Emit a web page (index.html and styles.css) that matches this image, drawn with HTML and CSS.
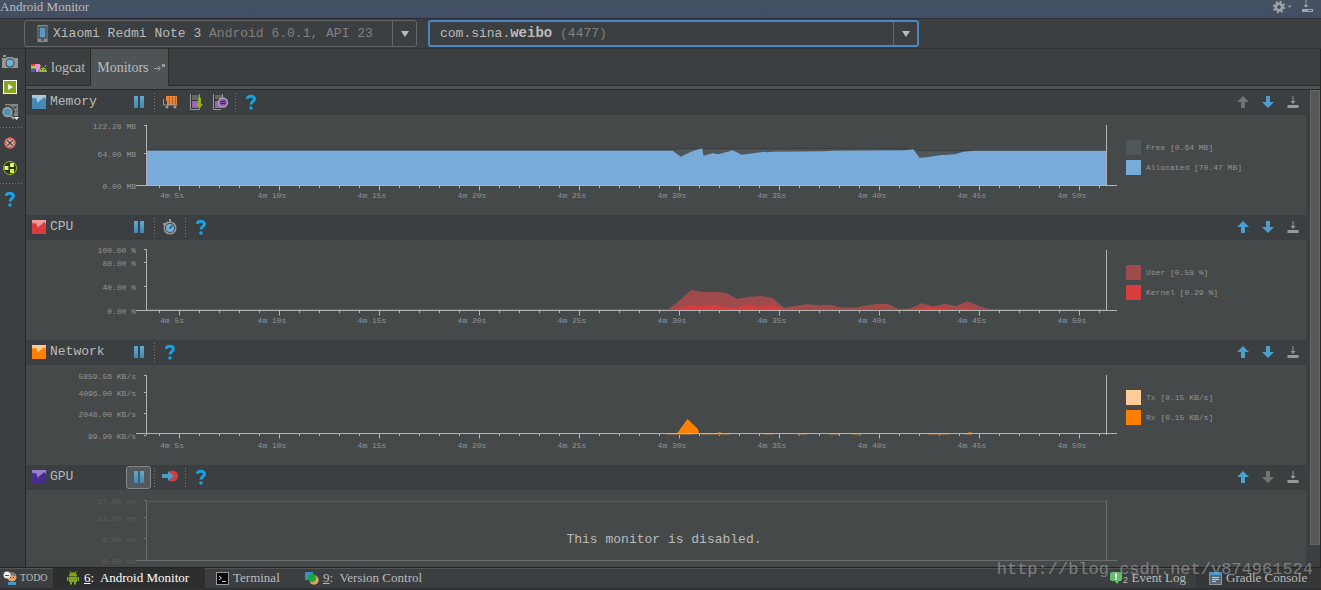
FILE: index.html
```html
<!DOCTYPE html>
<html lang="en">
<head>
<meta charset="utf-8">
<title>Android Monitor</title>
<link rel="stylesheet" href="styles.css">
</head>
<body>
<svg width="0" height="0" class="defs" aria-hidden="true">
  <defs>
    <linearGradient id="blue" x1="0" y1="0" x2="0" y2="1"><stop offset="0" stop-color="#62a9d2"/><stop offset="1" stop-color="#3f8bb8"/></linearGradient>
    <symbol id="pause" viewBox="0 0 16 16"><path fill="url(#blue)" d="M3 2h4v12H3zM9 2h4v12H9z"/></symbol>
    <symbol id="wave" viewBox="0 0 14 14"><path fill="currentColor" d="M0 4L1 2 2 4 3 3 4 3 6 8 8 5 9 5 11 3 12 2 14 4V14H0z"/></symbol>
    <symbol id="help" viewBox="0 0 16 16"><path fill="none" stroke="#13a3e6" stroke-width="3" d="M4.300 4.800C4.500 1.500 11.600 1.400 11.500 5C11.400 7.300 8 7.500 8 10.600"/><circle cx="8" cy="14" r="1.800" fill="#13a3e6"/></symbol>
    <symbol id="up" viewBox="0 0 16 16"><path fill="currentColor" d="M8 2l6 6h-4v6H6V8H2z"/></symbol>
    <symbol id="down" viewBox="0 0 16 16"><path fill="currentColor" d="M8 14l6-6h-4V2H6v6H2z"/></symbol>
    <symbol id="dock" viewBox="0 0 16 16"><path fill="#999" d="M7.500 2h1v5h2L8 10 5.500 7h2zM2.500 11h11v3h-11z"/></symbol>
    <symbol id="timer" viewBox="0 0 16 16"><path fill="none" stroke="#969696" stroke-width="2" d="M8 0v3M1 5h3l2-2"/><circle cx="8" cy="9" r="5.800" fill="#40484c" stroke="#969696" stroke-width="1.500"/><circle cx="8" cy="9" r="4" fill="#6fb2e0"/><path stroke="#2a4860" stroke-width="1.500" d="M7.500 9.500l3-3"/></symbol>
  </defs>
</svg>

<header class="titlebar">
  <h1>Android Monitor</h1>
  <button aria-label="Settings"><svg width="20" height="14" viewBox="0 0 20 14"><circle cx="7" cy="7" r="3.200" fill="none" stroke="#a2a5a8" stroke-width="2.600"/><circle cx="7" cy="7" r="5.200" fill="none" stroke="#a2a5a8" stroke-width="2" stroke-dasharray="2 2.080"/><path fill="#888c92" d="M15 5.500h5L17.500 8z"/></svg></button>
  <button aria-label="Hide"><svg width="12" height="14" viewBox="0 0 12 14"><path fill="#a2a5a8" d="M3.500 0h1v5h2L4 7.500 1.500 5h2zM0 9h11v3H0z"/><path fill="#49556b" d="M6 10h4v1H6z"/></svg></button>
</header>

<div class="toolbar">
  <div class="combo device">
    <svg width="11" height="17" viewBox="0 0 11 17"><rect x=".5" width="10" height="17" fill="#8b8b8b"/><rect x="2" y="2" width="7" height="11" fill="#559ac4" stroke="#2d3032"/><path fill="#222" d="M4 14.500h3v1H4z"/></svg>
    <span class="value">Xiaomi Redmi Note 3 <span class="dim">Android 6.0.1, API 23</span></span>
    <span class="arrow"></span>
    <select aria-label="Device"><option>Xiaomi Redmi Note 3 Android 6.0.1, API 23</option></select>
  </div>
  <div class="combo process focused">
    <span class="value">com.sina.<b>weibo</b> <span class="dim">(4477)</span></span>
    <span class="arrow"></span>
    <select aria-label="Process"><option>com.sina.weibo (4477)</option></select>
  </div>
</div>

<div class="workspace">
  <nav class="rail" aria-label="Capture tools">
    <button aria-label="Screen capture"><svg width="18" height="16" viewBox="0 0 18 16"><path fill="#969696" d="M2 1h3v2H2zM1 4h4l1-1h6l1 1h4v10H1z"/><circle cx="9" cy="9" r="4.500" fill="#44484a"/><circle cx="9" cy="9" r="3.400" fill="#6db2e0"/></svg></button>
    <button aria-label="Screen record"><svg width="16" height="16" viewBox="0 0 16 16"><rect x="1.500" y="1.500" width="13" height="13" fill="#86a821" stroke="#fff"/><path fill="#fff" d="M6 5l5 3-5 3z"/></svg></button>
    <button aria-label="System information"><svg width="18" height="18" viewBox="0 0 18 18"><path fill="#858585" d="M4 1h13v12H8V8H4z"/><path stroke="#45494b" stroke-width="2" stroke-dasharray="3 1.500" d="M8 4.500h8M11 8.500h5"/><circle cx="6.500" cy="9" r="4.800" fill="#4c90bd" stroke="#3c3f41" stroke-width="4"/><circle cx="6.500" cy="9" r="4.400" fill="#4c90bd" stroke="#a0a0a0" stroke-width="1.600"/><path stroke="#a0a0a0" stroke-width="2" d="M10 13l3 3"/><path fill="#eee" d="M13 14h5l-2.500 3z"/></svg></button>
    <hr>
    <button aria-label="Terminate application"><svg width="14" height="14" viewBox="0 0 14 14"><circle cx="7" cy="7" r="5.800" fill="#d9665b"/><path fill="none" stroke="#eee" stroke-width="3" d="M4 4l6 6M10 4l-6 6"/><path fill="none" stroke="#444" stroke-width="1.600" d="M4 4l6 6M10 4l-6 6"/></svg></button>
    <button aria-label="Layout inspector"><svg width="16" height="16" viewBox="0 0 16 16"><circle cx="8" cy="8" r="6.500" fill="#26380b" stroke="#9cc020"/><path fill="#d5ee4b" d="M2.500 6h4v4h-4zM8 3h4v4H8zM8 9h4v4H8z"/><path fill="#fff9bb" d="M3 6h2v3H3zM9 5h2v2H9z"/></svg></button>
    <hr>
    <button aria-label="Help"><svg width="16" height="16"><use href="#help"/></svg></button>
  </nav>

  <main>
    <div class="tabs" role="tablist">
      <button role="tab" class="tab"><svg width="17" height="10" viewBox="0 0 17 10"><path fill="#e0413c" d="M0 1h4v2H0z"/><path fill="#e8ba32" d="M0 3h4v2H0z"/><path fill="#49a85b" d="M0 5h4v1H0z"/><path fill="#5a57c9" d="M0 6h4v3H0z"/><path fill="#ee8ee0" d="M4 1h5v5L7 9H5V6H4z"/><path fill="#96ba35" d="M8 9c0-6 8-6 8 0z"/><path stroke="#96ba35" d="M9 2l1 2M15 2l-1 2"/><path fill="#333" d="M10 6h1v1h-1zM13 6h1v1h-1z"/></svg>logcat</button>
      <button role="tab" class="tab active" aria-selected="true">Monitors<svg width="12" height="10" viewBox="0 0 12 10"><path fill="none" stroke="#999" d="M0 5.500h6M4 3l2.500 2.500L4 8"/><path fill="#999" d="M8 1h3v3H8z"/></svg></button>
    </div>

    <div class="scroller">
      <div class="monitors">
        <section class="monitor">
          <div class="head">
            <svg class="mark memory-mark" width="14" height="14"><use href="#wave"/></svg>
            <h2>Memory</h2>
            <button aria-label="Pause"><svg width="16" height="16"><use href="#pause"/></svg></button>
            <i class="sep"></i>
            <button aria-label="Initiate GC"><svg width="16" height="16" viewBox="0 0 16 16"><path fill="#e98538" d="M4 2h11v9H5V7H4z"/><path stroke="#a85f2b" d="M7.500 3v7M10.500 3v7M13.500 3v7"/><path fill="none" stroke="#999" d="M1.500 5v6h14"/><circle cx="5" cy="13" r="1.500" fill="#999"/><circle cx="13" cy="13" r="1.500" fill="#999"/></svg></button>
            <button aria-label="Dump Java heap"><svg width="16" height="16" viewBox="0 0 16 16"><path fill="#333" stroke="#999" d="M3.500 0v15.500h9V0"/><path fill="#666" d="M5 1h7v5H5z"/><path fill="#9d62c2" d="M5 7h6v7H5z"/><path fill="#93b027" d="M11 4h3v6h2l-3.500 5L9 10h2z"/></svg></button>
            <button aria-label="Start allocation tracking"><svg width="18" height="16" viewBox="0 0 18 16"><path fill="#333" stroke="#999" d="M10 15.500H2.500V0M11.500 0v4"/><path fill="#666" d="M4 1h7v4H4z"/><path fill="#9d62c2" d="M4 7h6v7H4z"/><circle cx="12" cy="8.500" r="4.500" fill="#8a59ab" stroke="#aaa" stroke-width="1.300"/><path stroke="#2f2a36" d="M9.500 7.500h5M9.500 9.500h5"/></svg></button>
            <i class="sep"></i>
            <button aria-label="Help"><svg width="16" height="16"><use href="#help"/></svg></button>
            <span class="move">
              <button class="off" aria-label="Move up"><svg width="16" height="16"><use href="#up"/></svg></button>
              <button aria-label="Move down"><svg width="16" height="16"><use href="#down"/></svg></button>
              <button aria-label="Minimize"><svg width="16" height="16"><use href="#dock"/></svg></button>
            </span>
          </div>
          <div class="chart">
            <svg class="scale" width="110" height="76"><text x="110" y="14">122.28 MB</text><text x="110" y="42">64.00 MB</text><text x="110" y="74">0.00 MB</text></svg>
            <svg class="plot" viewBox="0 0 981 76" preserveAspectRatio="none">
              <g transform="translate(484 -25) scale(.33333)">
                <path fill="#4f575b" stroke="#373b3c" stroke-width="3" d="M-1422 286V178H160L180 176H800L885 178 900 182H1458V286z"/>
                <path fill="#78aada" d="M-1422 286V182H158L182 200 218 183 247 175 250 197 278 190 295 193 338 181 365 194 400 190 430 185 442 187 455 185 610 184 640 182 855 181 880 178 898 203 920 202 960 196 1005 193 1030 185 1060 182H1458V286z"/>
              </g>
              <path class="axis" d="M8 10.500h2.500V70M8 38.500h2M970.500 10v60M0 70.500h981"/><path class="minor" d="M23 72H964"/><path class="major" d="M43 73H964"/>
            </svg>
            <ul class="legend"><li><i class="free"></i>Free [0.64 MB]</li><li><i class="allocated"></i>Allocated [70.47 MB]</li></ul>
            <div class="times"><span>4m 5s</span><span>4m 10s</span><span>4m 15s</span><span>4m 20s</span><span>4m 25s</span><span>4m 30s</span><span>4m 35s</span><span>4m 40s</span><span>4m 45s</span><span>4m 50s</span></div>
          </div>
        </section>

        <section class="monitor">
          <div class="head">
            <svg class="mark cpu-mark" width="14" height="14"><use href="#wave"/></svg>
            <h2>CPU</h2>
            <button aria-label="Pause"><svg width="16" height="16"><use href="#pause"/></svg></button>
            <i class="sep"></i>
            <button aria-label="Start method tracing"><svg width="16" height="16"><use href="#timer"/></svg></button>
            <i class="sep"></i>
            <button aria-label="Help"><svg width="16" height="16"><use href="#help"/></svg></button>
            <span class="move">
              <button aria-label="Move up"><svg width="16" height="16"><use href="#up"/></svg></button>
              <button aria-label="Move down"><svg width="16" height="16"><use href="#down"/></svg></button>
              <button aria-label="Minimize"><svg width="16" height="16"><use href="#dock"/></svg></button>
            </span>
          </div>
          <div class="chart">
            <svg class="scale" width="110" height="76"><text x="110" y="13">100.00 %</text><text x="110" y="26">80.00 %</text><text x="110" y="50">40.00 %</text><text x="110" y="74">0.00 %</text></svg>
            <svg class="plot" viewBox="0 0 981 76" preserveAspectRatio="none">
              <g transform="translate(504) scale(.33333)">
                <path fill="#9f4b4b" d="M-1480 211V208H85L118 182 153 150 190 156 228 155 260 160 293 177 325 171 360 168 397 173 432 203 500 193 540 196 568 194 600 202 640 203 710 192 743 191 777 208 812 205 845 190 880 199 915 191 948 199 982 184 1020 199 1050 208H1398V211z"/>
                <path fill="#d83c3c" d="M90 211L150 195 190 197 228 194 262 203 295 202 328 193 360 200 397 196 435 209H800L845 204 880 202 950 208 982 204 1025 209V211z"/>
              </g>
              <path class="axis" d="M8 9.500h2.500V70M8 22.500h2M8 46.500h2M970.500 10v60M0 70.500h981"/><path class="minor" d="M23 72H964"/><path class="major" d="M43 73H964"/>
            </svg>
            <ul class="legend"><li><i class="user"></i>User [0.58 %]</li><li><i class="kernel"></i>Kernel [0.29 %]</li></ul>
            <div class="times"><span>4m 5s</span><span>4m 10s</span><span>4m 15s</span><span>4m 20s</span><span>4m 25s</span><span>4m 30s</span><span>4m 35s</span><span>4m 40s</span><span>4m 45s</span><span>4m 50s</span></div>
          </div>
        </section>

        <section class="monitor">
          <div class="head">
            <svg class="mark network-mark" width="14" height="14"><use href="#wave"/></svg>
            <h2>Network</h2>
            <button aria-label="Pause"><svg width="16" height="16"><use href="#pause"/></svg></button>
            <i class="sep"></i>
            <button aria-label="Help"><svg width="16" height="16"><use href="#help"/></svg></button>
            <span class="move">
              <button aria-label="Move up"><svg width="16" height="16"><use href="#up"/></svg></button>
              <button aria-label="Move down"><svg width="16" height="16"><use href="#down"/></svg></button>
              <button aria-label="Minimize"><svg width="16" height="16"><use href="#dock"/></svg></button>
            </span>
          </div>
          <div class="chart">
            <svg class="scale" width="110" height="76"><text x="110" y="14">5859.56 KB/s</text><text x="110" y="31">4096.00 KB/s</text><text x="110" y="52">2048.00 KB/s</text><text x="110" y="74">99.90 KB/s</text></svg>
            <svg class="plot" viewBox="0 0 981 76" preserveAspectRatio="none">
              <path fill="#ff8000" d="M541 68.500L551.500 54 562 64 563 68.500z"/>
              <path class="axis" d="M8 10.500h2.500V70M8 27.500h2M8 48.500h2M8 70.500h2M970.500 10v60M0 68.500h981"/><path class="minor" d="M23 70H964"/><path class="major" d="M43 71H964"/>
              <path stroke="#7c6448" d="M530 69.500h28M566 69.500h28M628 69.500h10M661 69.500h10M693 69.500h10M716 69.500h10M792 69.500h22M828 69.500h8"/>
              <path stroke="#a86a2c" d="M582 67.500h3M832 67.500h4"/>
            </svg>
            <ul class="legend"><li><i class="tx"></i>Tx [0.15 KB/s]</li><li><i class="rx"></i>Rx [0.15 KB/s]</li></ul>
            <div class="times"><span>4m 5s</span><span>4m 10s</span><span>4m 15s</span><span>4m 20s</span><span>4m 25s</span><span>4m 30s</span><span>4m 35s</span><span>4m 40s</span><span>4m 45s</span><span>4m 50s</span></div>
          </div>
        </section>

        <section class="monitor disabled">
          <div class="head">
            <svg class="mark gpu-mark" width="14" height="14"><use href="#wave"/></svg>
            <h2>GPU</h2>
            <button class="pressed" aria-label="Pause" aria-pressed="true"><svg width="16" height="16"><use href="#pause"/></svg></button>
            <i class="sep"></i>
            <button aria-label="Launch GPU trace"><svg width="16" height="16" viewBox="0 0 16 16"><circle cx="10.500" cy="7" r="5.500" fill="#d53c3c"/><path fill="#4a9cca" d="M0 5h6V2l6 5-6 5V9H0z"/></svg></button>
            <i class="sep"></i>
            <button aria-label="Help"><svg width="16" height="16"><use href="#help"/></svg></button>
            <span class="move">
              <button aria-label="Move up"><svg width="16" height="16"><use href="#up"/></svg></button>
              <button class="off" aria-label="Move down"><svg width="16" height="16"><use href="#down"/></svg></button>
              <button aria-label="Minimize"><svg width="16" height="16"><use href="#dock"/></svg></button>
            </span>
          </div>
          <div class="chart">
            <svg class="scale" width="110" height="76"><text x="110" y="14">17.00 ms</text><text x="110" y="31">12.00 ms</text><text x="110" y="52">6.00 ms</text><text x="110" y="74">0.00 ms</text></svg>
            <svg class="plot" viewBox="0 0 981 76" preserveAspectRatio="none"><path stroke="#4f604c" d="M11 11.500h959"/><path class="axis" d="M8 10.500h2.500V70M8 27.500h2M8 48.500h2M970.500 10v60M0 70.500h981"/></svg>
            <p class="notice">This monitor is disabled.</p>
          </div>
        </section>
      </div>
      <div class="track"><div class="thumb"></div></div>
    </div>
  </main>
</div>

<footer class="status">
  <button class="todo"><svg width="14" height="14" viewBox="0 0 14 14"><circle cx="9" cy="6" r="4.500" fill="#e0a66b"/><path fill="#777" d="M5 4c1-3 7-3 8 1z"/><circle cx="4" cy="4" r="3.500" fill="#eee"/><path stroke="#555" d="M2 4.500h4"/><path fill="#333" d="M7 6h1v1H7zM10 6h1v1h-1z"/><path fill="#3e98c9" d="M5 11h8v3H5z"/></svg>TODO</button>
  <button class="current"><svg width="14" height="14" viewBox="0 0 14 14"><path fill="#80a51b" d="M3 5c0-5 8-5 8 0zM3 5.500h8V11H3zM1 6h1.500v4H1zM11.500 6H13v4h-1.500zM4 11h2v2.500H4zM8 11h2v2.500H8z"/><path stroke="#80a51b" d="M4 0l1 2M10 0L9 2"/></svg><span><u>6</u>:&nbsp; Android Monitor</span></button>
  <button class="terminal"><svg width="13" height="13" viewBox="0 0 13 13"><rect x=".5" y=".5" width="12" height="12" fill="#080808" stroke="#999"/><path fill="none" stroke="#ccc" d="M3 4l2.500 2L3 8M6 9.500h4"/></svg>Terminal</button>
  <button class="vcs"><svg width="14" height="14" viewBox="0 0 14 14"><path fill="#4489bf" d="M0 1h8v8H0z"/><circle cx="9" cy="9" r="4.700" fill="#e0a65a"/><circle cx="7" cy="7" r="4" fill="#19a83b"/></svg><span><u>9</u>:&nbsp; Version Control</span></button>
  <button class="events"><svg width="18" height="14" viewBox="0 0 18 14"><rect y="1" width="12" height="9" rx="2" fill="#62bd6b"/><path fill="#62bd6b" d="M4 9h6l-3 4z"/><path stroke="#fff" stroke-width="2" d="M6 2.500v4M6 7.500v1.500"/><text class="count" x="13" y="12">2</text></svg>Event Log</button>
  <button class="gradle"><svg width="13" height="13" viewBox="0 0 13 13"><rect x=".5" y=".5" width="12" height="12" fill="#536976" stroke="#8d9498"/><path fill="#4d95c9" d="M0 0h13v3H0z"/><path stroke="#b8d2e2" d="M3 5.500h7M3 7.500h7M3 9.500h4"/></svg>Gradle Console</button>
  <span class="watermark">http://blog.csdn.net/v874961524</span>
</footer>
</body>
</html>
```

FILE: styles.css
```css
* { box-sizing: border-box; }

body {
  margin: 0;
  height: 100vh;
  display: flex;
  flex-direction: column;
  overflow: hidden;
  background: #3c3f41;
  color: #bbb;
  font: 13px/16px "Liberation Mono", monospace;
}

h1, h2, p, ul { margin: 0; padding: 0; font-weight: normal; }
svg { display: block; flex: none; }
.defs { position: absolute; }

button {
  display: flex;
  align-items: center;
  justify-content: center;
  padding: 0;
  border: 0;
  background: none;
  color: inherit;
  font: inherit;
}

.titlebar {
  flex: none;
  height: 19px;
  display: flex;
  align-items: flex-start;
  gap: 10px;
  padding-right: 7px;
  background: linear-gradient(#455264, #434e62);
  border-bottom: 1px solid #2b2e38;
}
.titlebar h1 {
  flex: 1;
  font: 13px/13px "Liberation Serif", serif;
}

.toolbar {
  flex: none;
  height: 30px;
  display: flex;
  align-items: center;
  gap: 11px;
  padding-left: 24px;
  border-bottom: 1px solid #323232;
}
.combo {
  position: relative;
  height: 27px;
  display: flex;
  align-items: center;
  border: 1px solid #636567;
  border-radius: 3px;
}
.combo.device { flex: 0 1 393px; padding-left: 12px; gap: 5px; }
.combo.process { flex: 0 1 491px; padding-left: 10px; }
.combo.focused { border: 2px solid #4a87c4; }
.combo .value { flex: 1; white-space: nowrap; overflow: hidden; }
.combo b { font-size: 14px; }
.dim { color: #808080; }
.combo select {
  position: absolute;
  inset: 0;
  width: 100%;
  opacity: 0;
}
.arrow {
  align-self: stretch;
  width: 24px;
  display: flex;
  align-items: center;
  justify-content: center;
  border-left: 1px solid #636567;
}
.arrow::before {
  content: "";
  border: 4px solid transparent;
  border-top: 6px solid #bbb;
  border-bottom: 0;
}

.workspace { flex: 1; min-height: 0; display: flex; }

.rail {
  flex: none;
  width: 26px;
  display: flex;
  flex-direction: column;
  padding-right: 5px;
  border-right: 1px solid #282a2b;
}
.rail button { height: 25px; }
.rail hr {
  width: 23px;
  height: 1px;
  margin: 3px 0 2px;
  border: 0;
  background: repeating-linear-gradient(90deg, #777 0 1px, transparent 1px 3px);
}

main { flex: 1; min-width: 0; display: flex; flex-direction: column; border-right: 1px solid #28292a; }

.tabs {
  flex: none;
  height: 41px;
  display: flex;
  border-bottom: 1px solid #282829;
  background: linear-gradient(transparent 36px, #2b2b2b 36px 37px, #4e5456 37px);
  font: 14px/16px "Liberation Serif", serif;
}
.tab {
  height: 37px;
  gap: 3px;
  padding: 0 5px;
  border-right: 1px solid #2b2b2b;
}
.tab.active { gap: 5px; padding: 0 2px 0 6px; background: #4e5456; }

.scroller { flex: 1; min-height: 0; display: flex; overflow: hidden; }
.monitors { flex: 1; min-width: 0; }
.track { flex: none; width: 14px; padding-left: 4px; }
.thumb { height: 455px; max-height: 96%; background: #555759; border: 1px solid #626466; }

.head { height: 25px; display: flex; align-items: center; padding: 0 1px 1px 6px; }
.head h2 { width: 80px; padding-left: 4px; font-size: 13px; }
.head button { width: 25px; height: 23px; }
.head .pressed { background: #53595c; border: 1px solid #84888a; border-radius: 3px; }
.memory-mark { background: #a9cbdf; color: #4589b5; }
.cpu-mark { background: #ed9b9b; color: #d83c3c; }
.network-mark { background: #ffc890; color: #ff8000; }
.gpu-mark { background: #9980d0; color: #4a2d8b; }
.sep {
  width: 1px;
  height: 19px;
  margin: 0 2px 0 3px;
  background: repeating-linear-gradient(#777 0 1px, transparent 1px 3px);
}
.move { margin-left: auto; display: flex; color: #4b9fcc; }
.move .off { color: #747474; }

.chart {
  position: relative;
  height: 100px;
  display: grid;
  grid-template-columns: 110px minmax(0, 1fr) 189px;
  grid-template-rows: 76px 24px;
  background: #464949;
  color: #929495;
  font-size: 8px;
  line-height: 10px;
}
.scale text { fill: #929495; text-anchor: end; }
.plot { width: 100%; height: 76px; }
.axis { fill: none; stroke: #b4b4b4; shape-rendering: crispEdges; }
.minor { stroke: #b4b4b4; stroke-width: 2; stroke-dasharray: 1 19; }
.major { stroke: #b4b4b4; stroke-width: 5; stroke-dasharray: 1 99; }

.legend { list-style: none; padding: 25px 0 0 9px; }
.legend li { display: flex; align-items: center; gap: 5px; height: 15px; margin-bottom: 5px; white-space: nowrap; }
.legend i { width: 15px; height: 15px; }
.free { background: #4f575b; }
.allocated { background: #78aada; }
.user { background: #9f4b4b; }
.kernel { background: #d83c3c; }
.tx { background: #ffcc99; }
.rx { background: #ff8000; }

.times {
  grid-column: 1 / -1;
  display: grid;
  grid-template-columns: repeat(10, 1fr);
  padding: 0 184px 0 96px;
  text-align: center;
}

.disabled .scale text { fill: #5a5d5e; }
.disabled .axis { stroke: #696c6d; }
.notice {
  position: absolute;
  inset: 0;
  display: grid;
  place-items: center;
  font-size: 13px;
  color: #bbb;
  padding-right: 4px;
}

.status {
  position: relative;
  flex: none;
  height: 23px;
  display: flex;
  border-top: 1px solid #242424;
  border-bottom: 2px solid #2e3031;
  box-shadow: inset 0 1px #555;
  font: 13px/16px "Liberation Serif", serif;
}
.status button { justify-content: flex-start; gap: 4px; white-space: nowrap; }
.status .todo { width: 53px; gap: 3px; padding-left: 3px; font-size: 10px; }
.status .current { width: 152px; padding-left: 13px; background: #2c2e2f; color: #fff; }
.status .terminal { width: 89px; padding-left: 11px; }
.status .vcs { padding-left: 11px; }
.status .events { margin-left: auto; gap: 3px; }
.status .gradle { width: 125px; margin-left: 10px; padding-left: 13px; background: #343637; }
.count { font: 9px "Liberation Sans", sans-serif; fill: #bbb; }
.watermark {
  position: absolute;
  right: 8px;
  bottom: 8px;
  font: 17px/20px "Liberation Mono", monospace;
  color: #a0a0a0;
  opacity: .65;
  pointer-events: none;
}
```
